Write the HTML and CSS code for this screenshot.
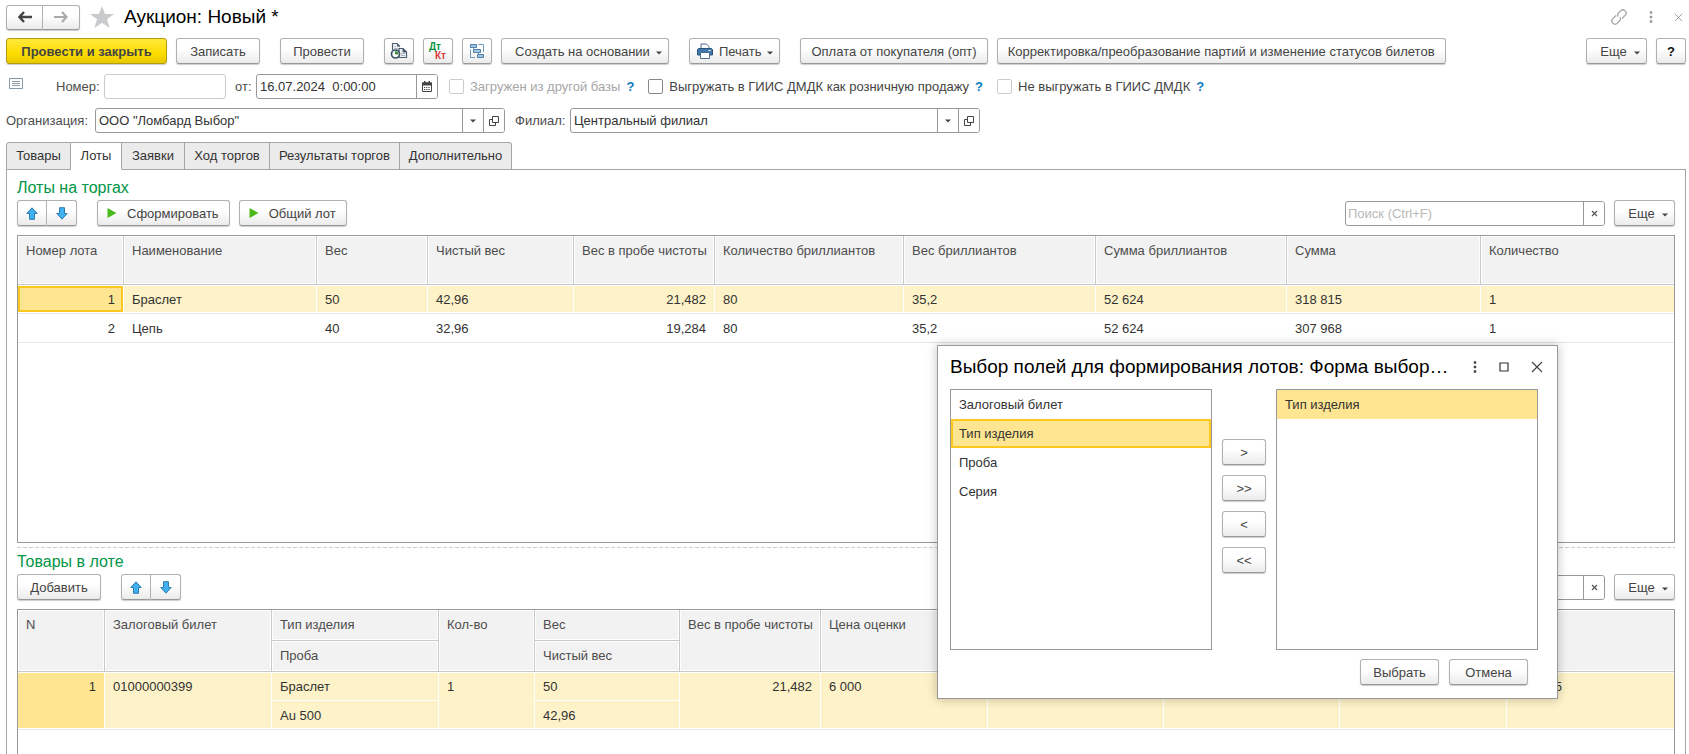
FILE: index.html
```html
<!DOCTYPE html>
<html lang="ru">
<head>
<meta charset="utf-8">
<title>Аукцион: Новый *</title>
<link rel="stylesheet" href="styles.css">
</head>
<body>
<svg class="sprite" aria-hidden="true">
  <symbol id="up" viewBox="0 0 12 13"><path d="M6 .8 11.2 6.5H8.5V12.3H3.5V6.5H.8Z" fill="#41b0f0" stroke="#2d7db0"/></symbol>
  <symbol id="down" viewBox="0 0 12 13"><path d="M6 12.2 11.2 6.5H8.5V.7H3.5V6.5H.8Z" fill="#41b0f0" stroke="#2d7db0"/></symbol>
  <symbol id="play" viewBox="0 0 10 10"><path d="M.5 0 9.5 5 .5 10Z" fill="#4ab91c"/></symbol>
  <symbol id="caret" viewBox="0 0 6 4"><path d="M0 .5H6L3 3.5Z" fill="#444"/></symbol>
  <symbol id="open" viewBox="0 0 10 10"><path d="M3.5.5H9.5V6.5H3.5ZM3.5 3.5H.5V9.5H6.5V6.5" fill="none" stroke="#444"/></symbol>
  <symbol id="cross" viewBox="0 0 12 12"><path d="M1 1 11 11M11 1 1 11" fill="none" stroke="currentColor" stroke-width="1.2"/></symbol>
  <symbol id="clear" viewBox="0 0 7 7"><path d="M1 1 6 6M6 1 1 6" fill="none" stroke="#555" stroke-width="1.2"/></symbol>
  <symbol id="dots" viewBox="0 0 4 12"><path d="M1 .5H3V2.500H1ZM1 5H3V7H1ZM1 9.500H3V11.500H1Z" fill="currentColor" stroke="currentColor" stroke-width=".5"/></symbol>
</svg>

<header class="titlebar">
  <div class="pair nav">
    <button class="btn" aria-label="Назад"><svg width="14" height="12" viewBox="0 0 14 12"><path d="M6 1 1.5 6 6 11M2 6H14" fill="none" stroke="#444" stroke-width="2.4"/></svg></button>
    <button class="btn" aria-label="Вперед"><svg width="14" height="12" viewBox="0 0 14 12"><path d="M8 1 12.5 6 8 11M12 6H0" fill="none" stroke="#aaa" stroke-width="2.2"/></svg></button>
  </div>
  <svg class="star" width="24" height="22" viewBox="0 0 24 22"><path d="M12 0 15 8H24L17 13.300 19.600 22 12 16.800 4.400 22 7 13.300 0 8H9Z" fill="#c9cacc"/></svg>
  <h1>Аукцион: Новый *</h1>
  <div class="window-tools">
    <svg width="18" height="18" viewBox="0 0 18 18"><g fill="none" stroke="#a6a6a6" stroke-width="1.300" transform="rotate(-45 9 9)"><path d="M8 5.800H3.500A3.200 3.200 0 0 0 3.500 12.200H6.500A3 3 0 0 0 9.400 10M10 12.200H14.500A3.200 3.200 0 0 0 14.500 5.800H11.500A3 3 0 0 0 8.600 8"/></g></svg>
    <svg width="4" height="12"><use href="#dots"/></svg>
    <svg width="9" height="9"><use href="#cross"/></svg>
  </div>
</header>

<div class="commands">
  <button class="btn primary">Провести и закрыть</button>
  <button class="btn">Записать</button>
  <button class="btn gap">Провести</button>
  <button class="btn square gap" aria-label="Движения документа"><svg width="18" height="18" viewBox="0 0 18 18"><path d="M2.500 9V1.500H7L10 4.500V8H8V15H3Z" fill="#eef1f4"/><path d="M2.500 8V1.500H7L10 4.500" fill="none" stroke="#4d5f70" stroke-width="1.200"/><path d="M7 1.500V4.500H10" fill="#4d5f70"/><path d="M4.500 4.500H6M4.500 6.500H7.500" stroke="#a8b2bb"/><path d="M9 6.500H13L16.500 10V15.500H9Z" fill="#eef1f4" stroke="#4d5f70" stroke-width="1.200"/><path d="M13 6.500V10H16.500Z" fill="#4d5f70" stroke="#4d5f70"/><path d="M11 11.500H15M11 13.500H15" stroke="#a8b2bb"/><circle cx="5.500" cy="12" r="4" fill="#fff" stroke="#3b5266" stroke-width="1.700"/><path d="M5.500 9.500V12H8A2.500 2.500 0 0 0 5.500 9.500" fill="#3fae3a" stroke="#287b2b" stroke-width=".8"/></svg></button>
  <button class="btn square dtkt" aria-label="Проводки"><span class="dt">Дт</span><span class="kt">Кт</span></button>
  <button class="btn square" aria-label="Структура подчиненности"><svg width="16" height="16" viewBox="0 0 16 16"><g fill="#a3c5e0" stroke="#4d80aa"><path d="M1.500 1.500H7.500V4.500H1.500ZM4.500 6.500H11.500V9.500H4.500ZM8.500 11.500H14.500V14.500H8.500Z"/></g><path d="M9.500 1.500H14.500V9M1.500 6.500V14.500H6M4.500 4.500V6M9.500 9.500V11" fill="none" stroke="#6d97ba"/></svg></button>
  <button class="btn menu">Создать на основании <svg width="6" height="4"><use href="#caret"/></svg></button>
  <button class="btn menu print gap"><svg width="16" height="16" viewBox="0 0 16 16"><path d="M4 6V1H9.500L12 3.500V6" fill="#fff" stroke="#4c6d8c"/><path d="M1.500 5.500H14.500L15.500 6.500V12H.5V6.500Z" fill="#3e78ad" stroke="#2e5478"/><path d="M3.500 9.500H12.500V15.500H3.500Z" fill="#fff" stroke="#4c6d8c"/><path d="M11.500 7.500H13.500" stroke="#fff"/></svg>Печать <svg width="6" height="4"><use href="#caret"/></svg></button>
  <button class="btn tight gap">Оплата от покупателя (опт)</button>
  <button class="btn tight">Корректировка/преобразование партий и изменение статусов билетов</button>
  <button class="btn menu more push">Еще <svg width="6" height="4"><use href="#caret"/></svg></button>
  <button class="btn help">?</button>
</div>

<div class="fields">
  <svg class="note" width="14" height="12" viewBox="0 0 14 12"><path d="M.5.5H13.500V10.500H.5ZM3 3.500H11M3 5.500H11M3 7.500H11" fill="none" stroke="#8b98a5"/></svg>
  <label class="lbl number-lbl" for="number">Номер:</label>
  <input class="box number" id="number">
  <label class="lbl date-lbl" for="date">от:</label>
  <div class="combo date">
    <input id="date" value="16.07.2024  0:00:00">
    <button aria-label="Календарь"><svg width="10" height="11" viewBox="0 0 10 11"><path d="M.5 2H9.500V10.500H.5Z" fill="#fff" stroke="#444"/><path d="M0 1.500H10V4.500H0ZM2 0H3.500V2H2ZM6.500 0H8V2H6.500Z" fill="#444"/><path d="M2 6.500H8M2 8.500H8" stroke="#444" stroke-dasharray="1.200 1"/></svg></button>
  </div>
  <label class="check off first"><input type="checkbox" disabled>Загружен из другой базы</label><a class="hint" href="#">?</a>
  <label class="check"><input type="checkbox">Выгружать в ГИИС ДМДК как розничную продажу</label><a class="hint" href="#">?</a>
  <label class="check pale"><input type="checkbox">Не выгружать в ГИИС ДМДК</label><a class="hint" href="#">?</a>
</div>

<div class="fields second">
  <label class="lbl org-lbl" for="org">Организация:</label>
  <div class="combo wide">
    <input id="org" value='ООО "Ломбард Выбор"'>
    <button aria-label="Список"><svg width="6" height="4"><use href="#caret"/></svg></button>
    <button aria-label="Открыть"><svg width="10" height="10"><use href="#open"/></svg></button>
  </div>
  <label class="lbl branch-lbl" for="branch">Филиал:</label>
  <div class="combo wide">
    <input id="branch" value="Центральный филиал">
    <button aria-label="Список"><svg width="6" height="4"><use href="#caret"/></svg></button>
    <button aria-label="Открыть"><svg width="10" height="10"><use href="#open"/></svg></button>
  </div>
</div>

<nav class="tabs">
  <button>Товары</button>
  <button class="active">Лоты</button>
  <button>Заявки</button>
  <button>Ход торгов</button>
  <button>Результаты торгов</button>
  <button>Дополнительно</button>
</nav>

<main class="panel">
  <h2>Лоты на торгах</h2>
  <div class="bar">
    <div class="pair">
      <button class="btn" aria-label="Вверх"><svg width="12" height="13"><use href="#up"/></svg></button>
      <button class="btn" aria-label="Вниз"><svg width="12" height="13"><use href="#down"/></svg></button>
    </div>
    <button class="btn run gap"><svg width="10" height="10"><use href="#play"/></svg>Сформировать</button>
    <button class="btn run"><svg width="10" height="10"><use href="#play"/></svg>Общий лот</button>
    <div class="combo search push">
      <input placeholder="Поиск (Ctrl+F)" aria-label="Поиск">
      <button aria-label="Очистить"><svg width="7" height="7"><use href="#clear"/></svg></button>
    </div>
    <button class="btn menu more">Еще <svg width="6" height="4"><use href="#caret"/></svg></button>
  </div>
  <div class="grid lots">
    <table>
      <colgroup><col style="width:106px"><col style="width:193px"><col style="width:111px"><col style="width:146px"><col style="width:141px"><col style="width:189px"><col style="width:192px"><col style="width:191px"><col style="width:194px"><col style="width:194px"></colgroup>
      <thead><tr><th>Номер лота</th><th>Наименование</th><th>Вес</th><th>Чистый вес</th><th>Вес в пробе чистоты</th><th>Количество бриллиантов</th><th>Вес бриллиантов</th><th>Сумма бриллиантов</th><th>Сумма</th><th>Количество</th></tr></thead>
      <tbody>
        <tr class="sel"><td class="num current">1</td><td>Браслет</td><td>50</td><td>42,96</td><td class="num">21,482</td><td>80</td><td>35,2</td><td>52 624</td><td>318 815</td><td>1</td></tr>
        <tr><td class="num">2</td><td>Цепь</td><td>40</td><td>32,96</td><td class="num">19,284</td><td>80</td><td>35,2</td><td>52 624</td><td>307 968</td><td>1</td></tr>
      </tbody>
    </table>
  </div>
  <div class="splitter"></div>
  <h2>Товары в лоте</h2>
  <div class="bar">
    <button class="btn">Добавить</button>
    <div class="pair gap">
      <button class="btn" aria-label="Вверх"><svg width="12" height="13"><use href="#up"/></svg></button>
      <button class="btn" aria-label="Вниз"><svg width="12" height="13"><use href="#down"/></svg></button>
    </div>
    <div class="combo search push">
      <input aria-label="Поиск">
      <button aria-label="Очистить"><svg width="7" height="7"><use href="#clear"/></svg></button>
    </div>
    <button class="btn menu more">Еще <svg width="6" height="4"><use href="#caret"/></svg></button>
  </div>
  <div class="grid goods">
    <table>
      <colgroup><col style="width:87px"><col style="width:167px"><col style="width:167px"><col style="width:96px"><col style="width:145px"><col style="width:141px"><col style="width:167px"><col style="width:176px"><col style="width:176px"><col style="width:167px"><col style="width:168px"></colgroup>
      <thead>
        <tr><th rowspan="2">N</th><th rowspan="2">Залоговый билет</th><th>Тип изделия</th><th rowspan="2">Кол-во</th><th>Вес</th><th rowspan="2">Вес в пробе чистоты</th><th rowspan="2">Цена оценки</th><th rowspan="2"></th><th rowspan="2"></th><th rowspan="2"></th><th rowspan="2"></th></tr>
        <tr><th>Проба</th><th>Чистый вес</th></tr>
      </thead>
      <tbody>
        <tr class="sel"><td rowspan="2" class="num marked">1</td><td rowspan="2">01000000399</td><td class="upper">Браслет</td><td rowspan="2">1</td><td class="upper">50</td><td rowspan="2" class="num">21,482</td><td rowspan="2">6 000</td><td rowspan="2"></td><td rowspan="2"></td><td rowspan="2"></td><td rowspan="2">318 815</td></tr>
        <tr class="sel"><td class="lower">Au 500</td><td class="lower">42,96</td></tr>
      </tbody>
    </table>
  </div>
</main>

<section class="dialog" role="dialog" aria-labelledby="dlg-title">
  <header class="dialog-head">
    <h3 id="dlg-title">Выбор полей для формирования лотов: Форма выбор…</h3>
    <svg width="4" height="12"><use href="#dots"/></svg>
    <svg width="10" height="10" viewBox="0 0 10 10"><path d="M1 1H9V9H1Z" fill="none" stroke="#333" stroke-width="1.200"/></svg>
    <svg width="12" height="12"><use href="#cross"/></svg>
  </header>
  <div class="picker">
    <ul class="list">
      <li>Залоговый билет</li>
      <li class="focus">Тип изделия</li>
      <li>Проба</li>
      <li>Серия</li>
    </ul>
    <div class="movers">
      <button class="btn">&gt;</button>
      <button class="btn">&gt;&gt;</button>
      <button class="btn">&lt;</button>
      <button class="btn">&lt;&lt;</button>
    </div>
    <ul class="list">
      <li class="chosen">Тип изделия</li>
    </ul>
  </div>
  <footer class="dialog-foot">
    <button class="btn">Выбрать</button>
    <button class="btn">Отмена</button>
  </footer>
</section>
</body>
</html>
```
FILE: styles.css
```css
* { box-sizing: border-box; }
body {
  margin: 0;
  padding: 4px 3px 0 6px;
  height: 100vh;
  display: flex;
  flex-direction: column;
  position: relative;
  overflow: hidden;
  background: #fff;
  color: #333;
  font: 13px/15px "Liberation Sans", Arial, sans-serif;
}
.sprite { position: absolute; width: 0; height: 0; }
svg { flex: none; display: block; }
button, input { font: inherit; color: inherit; }
h1, h2, h3 { margin: 0; font-weight: 400; }

.btn {
  display: inline-flex;
  align-items: center;
  justify-content: center;
  height: 26px;
  min-width: 84px;
  padding: 0 12px;
  white-space: nowrap;
  color: #444;
  background: linear-gradient(#fff 40%, #ebebeb);
  border: 1px solid #b0b0b0;
  border-bottom-color: #989898;
  border-radius: 3px;
  box-shadow: 0 1px 1px #ccc;
}
.primary {
  min-width: 161px;
  font-weight: 700;
  background: linear-gradient(#ffe93a, #fddc00 60%, #e8c800);
  border-color: #b39b10;
}
.tight { padding: 0 10px; }
.square { width: 30px; min-width: 0; padding: 0; }
.menu { gap: 6px; padding: 0 6px 0 13px; }
.menu svg:last-child { margin-top: 3px; }
.more { width: 61px; min-width: 0; gap: 7px; }
.help { width: 30px; min-width: 0; padding: 0; color: #111; font-weight: 700; }
.gap { margin-left: 11px; }
.push { margin-left: auto; }
.print { padding-left: 7px; }
.run { gap: 10px; padding: 0 10px 0 9px; }
.pair { display: flex; }
.pair .btn { width: 30px; min-width: 0; padding: 0; }
.pair .btn:first-child { border-radius: 3px 0 0 3px; }
.pair .btn:last-child { border-left: 0; border-radius: 0 3px 3px 0; }
.pair.nav .btn { width: 37px; height: 25px; }

.titlebar { display: flex; align-items: center; height: 26px; }
.star { margin: 0 10px; }
h1 { font-size: 19px; line-height: 24px; color: #000; }
.window-tools { display: flex; align-items: center; gap: 21px; margin-left: auto; color: #999; padding-right: 3px; }

.commands { display: flex; gap: 9px; margin-top: 8px; }
.dtkt { flex-direction: column; align-items: flex-start; font-size: 10px; font-weight: 700; line-height: 9px; }
.dt { color: #0b9444; margin-left: 5px; }
.kt { color: #d9403a; margin-left: 11px; }

.fields { display: flex; align-items: center; margin-top: 10px; height: 25px; }
.fields.second { margin-top: 9px; }
.lbl { color: #4d4d4d; white-space: nowrap; }
.note { margin: 0 33px 5px 3px; }
.number-lbl { width: 48px; }
.box { height: 25px; border: 1px solid #ccc; border-radius: 3px; }
.number { width: 122px; }
.date-lbl { margin-left: 9px; width: 21px; }
.combo {
  display: flex;
  height: 25px;
  border: 1px solid #999;
  border-radius: 3px;
  background: #fff;
  overflow: hidden;
}
.combo input { flex: 1; min-width: 0; border: 0; padding: 0 3px; outline: 0; background: none; white-space: pre; }
.combo button { width: 21px; padding: 0; border: 0; border-left: 1px solid #999; background: #fff; display: flex; align-items: center; justify-content: center; }
.date { width: 182px; }
.wide { width: 410px; }
.search { width: 260px; align-self: flex-end; }
.search input { padding: 0 2px; }
.search input::placeholder { color: #b8b8b8; opacity: 1; }
.org-lbl { width: 89px; }
.branch-lbl { margin-left: 10px; width: 55px; }
.check { display: flex; align-items: center; gap: 6px; margin-left: 14px; white-space: nowrap; color: #444; }
.check.first { margin-left: 11px; }
.check input { appearance: none; width: 15px; height: 15px; margin: 0; border: 1px solid #888; border-radius: 2px; background: #fff; }
.check.off { color: #a6a6a6; }
.check.off input, .check.pale input { border-color: #ccc; }
.hint { margin-left: 6px; color: #0a7bc2; font-weight: 700; text-decoration: none; }

.tabs {
  position: relative;
  z-index: 1;
  align-self: flex-start;
  display: grid;
  grid-template-columns: 65px 51px 63px 85px 130px 112px;
  margin-top: 9px;
  height: 28px;
}
.tabs button {
  padding: 0 0 2px;
  border: 1px solid #a6a6a6;
  border-left-width: 0;
  background: #ebebeb;
  color: #333;
  white-space: nowrap;
}
.tabs button:first-child { border-left-width: 1px; border-top-left-radius: 3px; }
.tabs button:last-child { border-top-right-radius: 3px; }
.tabs .active { background: #fff; border-bottom-color: #fff; }

.panel {
  flex: 1;
  min-height: 0;
  display: flex;
  flex-direction: column;
  margin-top: -1px;
  padding: 9px 10px 0 10px;
  border: 1px solid #a6a6a6;
  border-bottom: 0;
}
h2 { font-size: 16px; line-height: 18px; color: #009646; }
.bar { display: flex; gap: 9px; margin: 3px 0 9px; }

.grid { border: 1px solid #999; overflow: hidden; }
.lots { flex: 0 0 308px; }
.goods { flex: 1; border-bottom: 0; }
.grid table { width: 100%; table-layout: fixed; border-collapse: separate; border-spacing: 0; }
th, td { padding: 7px 8px 0; vertical-align: top; text-align: left; font-weight: 400; white-space: nowrap; }
th {
  height: 49px;
  color: #4d4d4d;
  background: #f2f2f2;
  border-right: 1px solid #c8c8c8;
  border-bottom: 1px solid #c8c8c8;
  box-shadow: inset 0 0 0 1px #fff;
}
.goods th { height: 31px; }
th:last-child, td:last-child { border-right: 0; }
.goods tr + tr th:last-child, .goods tr + tr td:last-child { border-right: 1px solid #c8c8c8; }
td {
  height: 29px;
  border-right: 1px solid #fff;
  border-bottom: 1px solid #e6e6e6;
  box-shadow: inset 0 1px #fff, inset 0 -1px #fff;
}
.goods tr + tr td:last-child { border-right-color: #fff; }
.num { text-align: right; }
.sel td { background: #fdf2c8; }
.sel .marked { background: #fee591; }
.sel .current {
  background: #fee591;
  box-shadow: inset 0 1px #fff, inset 0 -1px #fff, inset 2px 0 #fcc81e, inset -2px 0 #fcc81e, inset 0 3px #fcc81e, inset 0 -3px #fcc81e;
}
.sel .upper { border-bottom-color: #fff; box-shadow: inset 0 1px #fff; }
.sel .lower { box-shadow: inset 0 -1px #fff; }
.splitter { height: 1px; margin: 4px 0 5px; background: repeating-linear-gradient(90deg, #ccc 0 4px, transparent 4px 6px); flex: none; }

.dialog {
  position: absolute;
  z-index: 2;
  top: 345px;
  right: 131px;
  width: 621px;
  padding: 0 19px 13px 12px;
  background: #fff;
  border: 1px solid #999;
  box-shadow: 0 0 10px rgba(0, 0, 0, .25);
}
.dialog-head { display: flex; align-items: center; height: 43px; margin-right: -5px; padding-bottom: 1px; color: #444; }
.dialog-head h3 { flex: 1; min-width: 0; font-size: 19px; line-height: 24px; color: #000; white-space: nowrap; }
.dialog-head svg + svg { margin-left: 22px; }
.picker { display: grid; grid-template-columns: 1fr 44px 1fr; gap: 10px; }
.list { margin: 0; padding: 0; height: 261px; list-style: none; border: 1px solid #999; }
.list li { height: 29px; padding: 7px 8px; }
.list .chosen, .list .focus { background: #fee591; }
.list .focus { box-shadow: inset 0 0 0 2px #fcc81e; }
.movers { display: flex; flex-direction: column; gap: 10px; padding-top: 50px; }
.movers .btn { min-width: 0; padding: 0; }
.dialog-foot { display: flex; justify-content: flex-end; gap: 10px; margin: 9px 10px 0 0; }
.dialog-foot .btn { min-width: 79px; padding: 0; }
```
